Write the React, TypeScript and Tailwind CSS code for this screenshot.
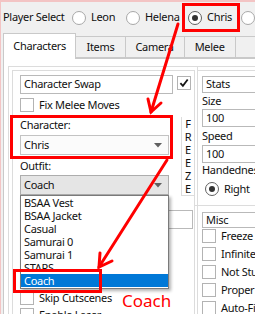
import React from 'react';

// small win32-ish form controls
const Check: React.FC<{ checked?: boolean }> = ({ checked }) => (
  <span className="inline-flex shrink-0 w-[14px] h-[14px] items-center justify-center border border-[#b3b3b3] bg-white">
    {checked && (
      <svg width="10" height="10" viewBox="0 0 10 10">
        <path d="M1.4 5.2 L3.9 7.9 L8.7 1.5" fill="none" stroke="#151515" strokeWidth="1.8" />
      </svg>
    )}
  </span>
);

const Radio: React.FC<{ checked?: boolean }> = ({ checked }) => (
  <span
    className={`flex shrink-0 w-[14px] h-[14px] rounded-full items-center justify-center bg-white border ${
      checked ? 'border-[#606060]' : 'border-[#a8a8a8]'
    }`}
  >
    {checked && <span className="w-[6px] h-[6px] rounded-full bg-[#333333]" />}
  </span>
);

const Field: React.FC<{ text?: string; className?: string }> = ({ text, className = '' }) => (
  <div
    className={`flex shrink-0 items-center pl-[3px] bg-white border border-[#b9b9b9] whitespace-nowrap overflow-hidden ${className}`}
  >
    {text}
  </div>
);

const Arrow = () => (
  <svg width="8" height="5" viewBox="0 0 8 5">
    <path d="M0 0 L8 0 L4 4.5 Z" fill="#606060" />
  </svg>
);

const Combo: React.FC<{ text: string; open?: boolean }> = ({ text, open }) => (
  <div
    className={`flex items-center justify-between w-[149px] h-[20px] pl-[3px] pr-[6px] border ${
      open ? 'bg-[#e5e5e5] border-[#adadad]' : 'bg-[#fbfbfb] border-[#c3c3c3]'
    }`}
  >
    <span>{text}</span>
    <Arrow />
  </div>
);

const CheckRow: React.FC<{ label?: string; className?: string }> = ({ label, className = '' }) => (
  <div className={`flex items-center h-[14px] whitespace-nowrap ${className}`}>
    <Check />
    {label && <span className="ml-[5px]">{label}</span>}
  </div>
);

const outfits = ['BSAA Vest', 'BSAA Jacket', 'Casual', 'Samurai 0', 'Samurai 1', 'STARS', 'Coach'];

export default function App() {
  return (
    <div className="relative w-[255px] h-[314px] overflow-hidden flex flex-col bg-[#f0f0f0] border-t-2 border-l border-[#f3c4c4] text-[11px] tracking-[-0.3px] text-[#111111] font-['Noto_Sans',sans-serif]">
      {/* player select */}
      <div className="flex items-center h-[31px] pl-[2px] whitespace-nowrap shrink-0">
        <span className="w-[69px] shrink-0">Player Select</span>
        <div className="flex items-center w-[54px] shrink-0">
          <Radio />
          <span className="ml-[5px]">Leon</span>
        </div>
        <div className="flex items-center w-[62px] shrink-0">
          <Radio />
          <span className="ml-[5px]">Helena</span>
        </div>
        <div className="flex items-center w-[53px] shrink-0">
          <Radio checked />
          <span className="ml-[5px]">Chris</span>
        </div>
        <Radio />
      </div>

      {/* tabs */}
      <div className="flex items-end h-[25px] pl-[2px] shrink-0 whitespace-nowrap">
        <div className="relative z-10 -mb-px flex items-center justify-center w-[76px] h-[26px] bg-white border border-b-0 border-[#c9c9c9]">
          Characters
        </div>
        <div className="flex items-center justify-center w-[51px] h-[22px] border border-l-0 border-[#c9c9c9]">Items</div>
        <div className="flex items-center justify-center w-[61px] h-[22px] border border-l-0 border-[#c9c9c9]">Camera</div>
        <div className="flex items-center justify-center w-[53px] h-[22px] border border-l-0 border-[#c9c9c9]">Melee</div>
        <div className="w-[20px] h-[22px] border border-l-0 border-r-0 border-[#c9c9c9]" />
      </div>

      {/* tab page */}
      <div className="flex flex-1 ml-[2px] pl-[4px] pt-[7px] bg-white border-t border-l border-[#c9c9c9]">
        {/* left group */}
        <div className="w-[190px] shrink-0 pt-[3px] pl-[3px] pr-[2px] border-t border-l border-r border-[#dcdcdc]">
          <div className="h-full pl-[7px] pt-[4px] border-t border-l border-r border-[#dcdcdc]">
            <div className="flex items-center h-[19px]">
              <Field text="Character Swap" className="w-[153px] h-[19px]" />
              <span className="ml-[4px]">
                <Check checked />
              </span>
            </div>
            <CheckRow label="Fix Melee Moves" className="mt-[4px]" />

            <div className="flex mt-[3px]">
              <div className="w-[149px] shrink-0">
                <div className="flex items-center h-[20px]">Character:</div>
                <Combo text="Chris" />
                <div className="flex items-center h-[20px] pt-[3px]">Outfit:</div>
                <Combo text="Coach" open />
              </div>
              <div className="flex flex-col items-center w-[13px] ml-[12px] mt-[2px] h-[79px] border-l border-b border-[#dcdcdc] leading-[13px]">
                <span>F</span>
                <span>R</span>
                <span>E</span>
                <span>E</span>
                <span>Z</span>
                <span>E</span>
              </div>
            </div>

            <Field className="w-[173px] h-[19px] mt-[14px]" />
            <CheckRow className="mt-[11px]" />
            <CheckRow className="mt-[3px]" />
            <CheckRow className="mt-[3px]" />
            <CheckRow label="Skip Cutscenes" className="mt-[3px]" />
            <CheckRow label="Enable Laser" className="mt-[3px]" />
          </div>
        </div>

        {/* right group */}
        <div className="flex-1 min-w-0 pt-[3px] border-t border-[#dcdcdc] whitespace-nowrap">
          <div className="pl-[4px] pt-[5px] border-t border-[#dcdcdc]">
            <Field text="Stats" className="w-[70px] h-[17px] border-r-0" />
            <div className="flex items-center h-[16px]">Size</div>
            <Field text="100" className="w-[70px] h-[18px] border-r-0" />
            <div className="flex items-center h-[18px]">Speed</div>
            <Field text="100" className="w-[70px] h-[18px] border-r-0" />
            <div className="flex items-center h-[14px]">Handedness</div>
            <div className="flex items-center h-[14px] mt-[5px] pl-[3px]">
              <Radio checked />
              <span className="ml-[5px]">Right</span>
            </div>
          </div>
          <div className="mt-[9px] -ml-[3px] pl-[7px] pt-[6px] border-t border-[#dcdcdc]">
            <Field text="Misc" className="w-[70px] h-[16px] border-r-0" />
            <CheckRow label="Freeze Health" className="mt-[1px]" />
            <CheckRow label="Infinite Ammo" className="mt-[4px]" />
            <CheckRow label="Not Stunned" className="mt-[4px]" />
            <CheckRow label="Proper Aim" className="mt-[4px]" />
            <CheckRow label="Auto-Fire" className="mt-[4px]" />
          </div>
        </div>
      </div>

      {/* opened outfit list */}
      <div className="absolute left-[19px] top-[193px] w-[149px] h-[94px] bg-white border border-[#7a7a7a] shadow-[2px_2px_3px_rgba(0,0,0,0.3)] leading-[13px] whitespace-nowrap">
        {outfits.map((o, i) => (
          <div
            key={o}
            className={`h-[13px] pl-[3px] ${i === outfits.length - 1 ? 'bg-[#0078d7] text-white' : ''}`}
          >
            {o}
          </div>
        ))}
      </div>

      {/* annotations */}
      <div className="absolute left-[181px] top-[1px] w-[58px] h-[29px] border-[3px] border-[#ff0000]" />
      <div className="absolute left-[9px] top-[113px] w-[163px] h-[44px] border-[3px] border-[#ff0000]" />
      <div className="absolute left-[12px] top-[267px] w-[89px] h-[24px] border-[3px] border-[#ff0000]" />
      <svg className="absolute left-[-1px] top-[-2px] pointer-events-none" width="255" height="314" viewBox="0 0 255 314">
        <g stroke="#ff0000" strokeWidth="3" fill="none" strokeLinecap="round">
          <path d="M178 24 L151 112" />
          <path d="M148 99 L151 112 L161 103" />
          <path d="M167 160 L99 267" />
          <path d="M100 253 L99 267 L112 261" />
        </g>
      </svg>
      <span className="absolute left-[121px] top-[289px] text-[17px] leading-[20px] tracking-normal text-[#ff0000]">Coach</span>
    </div>
  );
}
